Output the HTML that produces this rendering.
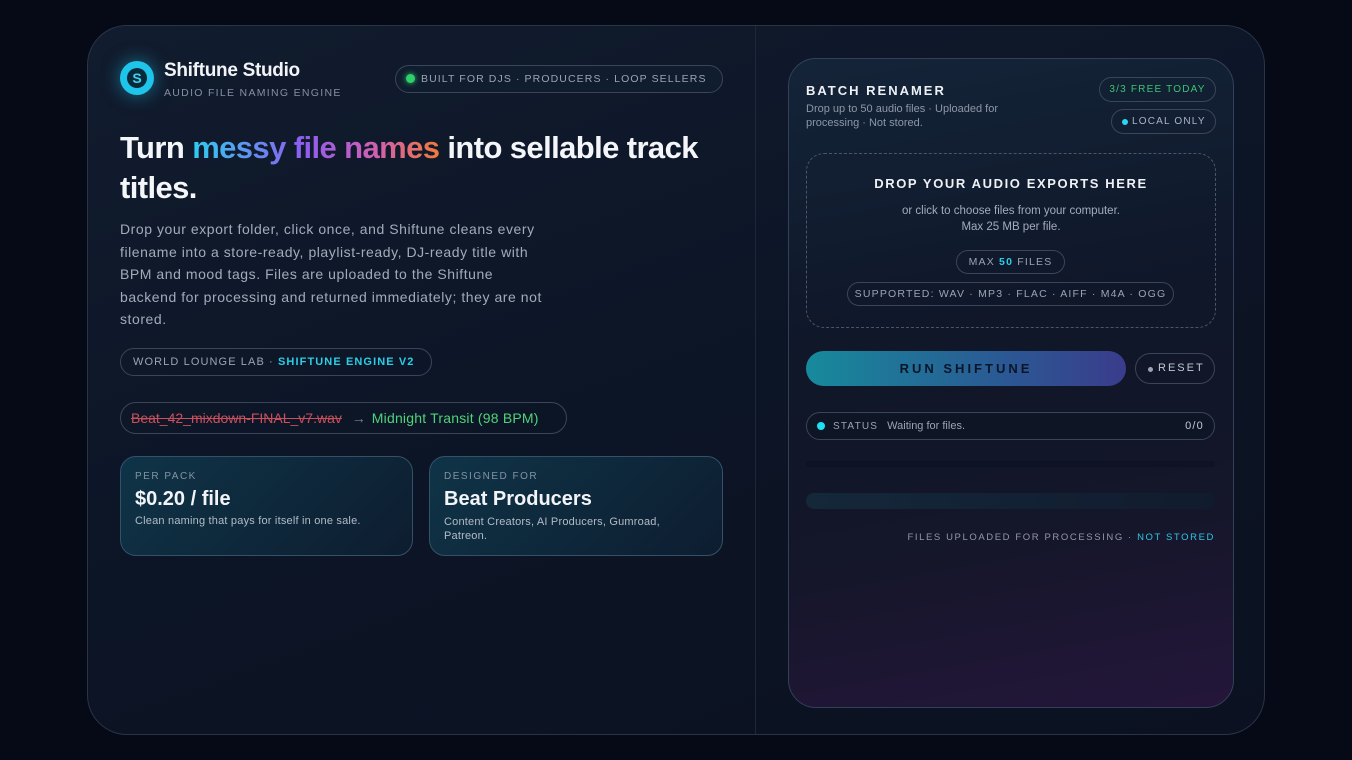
<!DOCTYPE html>
<html><head><meta charset="utf-8"><style>
*{box-sizing:border-box;margin:0;padding:0}
body{width:1352px;height:760px;background:#060a16;font-family:"Liberation Sans",sans-serif;position:relative;overflow:hidden;color:#e8ecf4}
.card{position:absolute;left:87px;top:25px;width:1178px;height:710px;border-radius:40px;border:1px solid #2a3447;background:linear-gradient(160deg,#111c2e 0%,#0c1526 50%,#0b1120 100%);overflow:hidden}
.div{position:absolute;left:667px;top:0;width:1px;height:100%;background:#1e2738}
.a{position:absolute}
.pill{position:absolute;border:1px solid #3a4558;border-radius:20px;letter-spacing:1.2px;font-size:11px;color:#9aa4b4;white-space:nowrap}
.right{position:absolute;left:700px;top:32px;width:446px;height:650px;border-radius:28px;border:1px solid #34405a;background:linear-gradient(170deg,#142438 0%,#0f1729 40%,#141629 70%,#24163a 100%)}
</style></head><body>
<div class="card">
<div class="div"></div>
<div class="a" style="left:32px;top:35px;width:34px;height:34px;border-radius:50%;background:#1fc4ea;box-shadow:0 0 18px rgba(40,200,240,.5)"><div style="position:absolute;left:7px;top:7px;width:20px;height:20px;border-radius:50%;background:#0a2a3a;color:#3cd4f4;font-weight:bold;font-size:14px;text-align:center;line-height:20px">S</div></div>
<div class="a" style="left:76px;top:34px;font-size:19px;font-weight:bold;letter-spacing:-.3px;color:#f2f4f8">Shiftune Studio</div>
<div class="a" style="left:76px;top:61px;font-size:10.5px;letter-spacing:1.3px;color:#8590a2">AUDIO FILE NAMING ENGINE</div>
<div class="pill" style="left:307px;top:39px;width:328px;height:28px;line-height:26px;padding-left:25px;background:#101d2e;font-size:10.5px;letter-spacing:1.1px"><span style="position:absolute;left:10px;top:8px;width:9px;height:9px;border-radius:50%;background:#2ed06a;box-shadow:0 0 6px #2ed06a"></span>BUILT FOR DJS · PRODUCERS · LOOP SELLERS</div>
<div class="a" style="left:32px;top:102px;font-size:31px;font-weight:bold;line-height:40px;letter-spacing:-.6px;width:620px;color:#f4f6fa">Turn <span style="background:linear-gradient(90deg,#2ecdf0,#8f5cf0 45%,#d060b0 75%,#f07a3a);-webkit-background-clip:text;color:transparent">messy file names</span> into sellable track titles.</div>
<div class="a" style="left:32px;top:192px;width:424px;font-size:14px;line-height:22.6px;letter-spacing:.55px;color:#a3abb9">Drop your export folder, click once, and Shiftune cleans every filename into a store-ready, playlist-ready, DJ-ready title with BPM and mood tags. Files are uploaded to the Shiftune backend for processing and returned immediately; they are not stored.</div>
<div class="pill" style="left:32px;top:322px;width:312px;height:28px;line-height:26px;padding-left:12px;letter-spacing:1.1px">WORLD LOUNGE LAB · <b style="color:#2ccde6">SHIFTUNE ENGINE V2</b></div>
<div class="pill" style="left:32px;top:376px;width:447px;height:32px;line-height:30px;padding-left:10px;letter-spacing:0;font-size:14px"><span style="color:#c9505a;text-decoration:line-through">Beat_42_mixdown-FINAL_v7.wav</span> <span style="color:#7a8494;margin:0 6px">→</span><span style="color:#4fd37a;letter-spacing:.2px">Midnight Transit (98 BPM)</span></div>
<div class="a" style="left:32px;top:430px;width:293px;height:100px;border-radius:16px;border:1px solid #34506a;background:linear-gradient(135deg,#0f3447,#0e1d30);padding:14px"><div style="font-size:10px;letter-spacing:1.5px;color:#8592a4">PER PACK</div><div style="font-size:20px;font-weight:bold;margin-top:6px;color:#f2f4f8">$0.20 / file</div><div style="font-size:11px;color:#b3bbc8;margin-top:4px;letter-spacing:.2px">Clean naming that pays for itself in one sale.</div></div>
<div class="a" style="left:341px;top:430px;width:294px;height:100px;border-radius:16px;border:1px solid #34506a;background:linear-gradient(135deg,#0f3447,#0e1d30);padding:14px"><div style="font-size:10px;letter-spacing:1.5px;color:#8592a4">DESIGNED FOR</div><div style="font-size:20px;font-weight:bold;margin-top:6px;color:#f2f4f8">Beat Producers</div><div style="font-size:11px;color:#b3bbc8;margin-top:4px;line-height:14px;width:230px;letter-spacing:.2px">Content Creators, AI Producers, Gumroad, Patreon.</div></div>

<div class="right">
<div class="a" style="left:17px;top:24px;font-size:13px;font-weight:bold;letter-spacing:2px;color:#eef1f6">BATCH RENAMER</div>
<div class="a" style="left:17px;top:43px;width:230px;font-size:11px;line-height:14px;color:#8d97a8">Drop up to 50 audio files · Uploaded for processing · Not stored.</div>
<div class="pill" style="left:310px;top:18px;width:117px;height:25px;line-height:23px;text-align:center;color:#3cc470;font-size:10px">3/3 FREE TODAY</div>
<div class="pill" style="left:322px;top:50px;width:105px;height:25px;line-height:23px;padding-left:20px;font-size:10px;color:#aab3c2"><span style="position:absolute;left:10px;top:9px;width:6px;height:6px;border-radius:50%;background:#2cd6f0"></span>LOCAL ONLY</div>
<div class="a" style="left:17px;top:94px;width:410px;height:175px;border:1px dashed #4a5668;border-radius:18px;text-align:center">
<div style="margin-top:22px;font-size:13px;font-weight:bold;letter-spacing:1.6px;color:#eef1f6">DROP YOUR AUDIO EXPORTS HERE</div>
<div style="margin-top:12px;font-size:11.5px;line-height:16px;color:#a3acbb">or click to choose files from your computer.<br>Max 25 MB per file.</div>
<div class="pill" style="left:149px;top:96px;width:109px;height:24px;line-height:22px;font-size:10.5px">MAX <b style="color:#2ccde6">50</b> FILES</div>
<div class="pill" style="left:40px;top:128px;width:327px;height:24px;line-height:22px;font-size:10.5px;letter-spacing:1.2px">SUPPORTED: WAV · MP3 · FLAC · AIFF · M4A · OGG</div>
</div>
<div class="a" style="left:17px;top:292px;width:320px;height:35px;border-radius:18px;background:linear-gradient(90deg,#178a9c,#2a5a94 60%,#3a3c8c);text-align:center;line-height:35px;font-size:13px;font-weight:bold;letter-spacing:3px;color:#0a1628">RUN SHIFTUNE</div>
<div class="pill" style="left:346px;top:294px;width:80px;height:31px;line-height:29px;padding-left:22px;font-size:11px;color:#c0c8d4;letter-spacing:2px"><span style="position:absolute;left:12px;top:13px;width:5px;height:5px;border-radius:50%;background:#9aa4b4"></span>RESET</div>
<div class="pill" style="left:17px;top:353px;width:409px;height:28px;line-height:26px;padding-left:26px;font-size:10px;background:#0e1626"><span style="position:absolute;left:10px;top:9px;width:8px;height:8px;border-radius:50%;background:#1ee0f4"></span>STATUS <span style="letter-spacing:0;font-size:11px;color:#9aa4b4;margin-left:5px">Waiting for files.</span><span style="position:absolute;right:10px;color:#c0c8d4;font-size:11px">0/0</span></div>
<div class="a" style="left:17px;top:402px;width:409px;height:6px;border-radius:3px;background:#0d1322"></div>
<div class="a" style="left:17px;top:434px;width:409px;height:16px;border-radius:8px;background:linear-gradient(90deg,#14283a,#111b2e)"></div>
<div class="a" style="right:18px;top:473px;font-size:9.5px;letter-spacing:1.6px;color:#9099a8">FILES UPLOADED FOR PROCESSING · <span style="color:#2cc8e0">NOT STORED</span></div>
</div>
</div>
</body></html>
